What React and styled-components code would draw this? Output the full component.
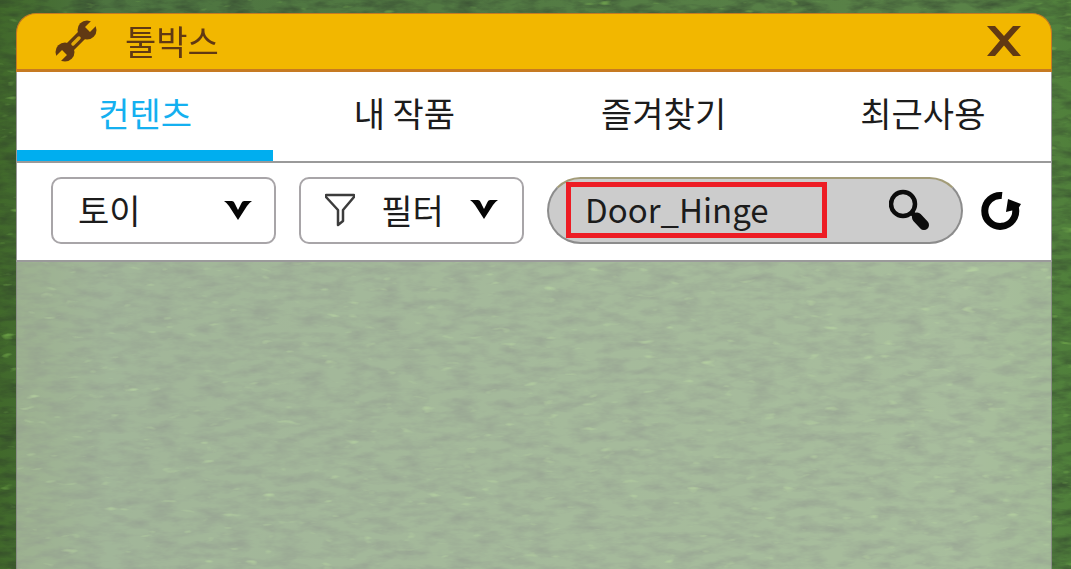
import { useState } from "react";
import styled, { createGlobalStyle } from "styled-components";

const tabs = ["컨텐츠", "내 작품", "즐겨찾기", "최근사용"];

function App() {
  const [active, setActive] = useState(0);
  const [keyword, setKeyword] = useState("Door_Hinge");

  return (
    <Scene>
      <GlobalStyle />
      <Grass aria-hidden="true">
        <defs>
          <linearGradient id="field" x1="0" y1="0" x2="1" y2="0">
            <stop offset="0" stopColor="#41692b" />
            <stop offset="0.1" stopColor="#4d7440" />
            <stop offset="0.9" stopColor="#5a8348" />
            <stop offset="1" stopColor="#50803b" />
          </linearGradient>
          <filter id="blades" x="0" y="0" width="100%" height="100%" colorInterpolationFilters="sRGB">
            <feTurbulence type="fractalNoise" baseFrequency="0.04 0.12" numOctaves="4" seed="4" />
            <feColorMatrix values="0 0 0 0 0.16  0 0 0 0 0.2  0 0 0 0 0.16  1 0 0 0 -0.37" />
          </filter>
          <filter id="shine" x="0" y="0" width="100%" height="100%" colorInterpolationFilters="sRGB">
            <feTurbulence type="fractalNoise" baseFrequency="0.05 0.15" numOctaves="2" seed="11" />
            <feColorMatrix values="0 0 0 0 0.55  0 0 0 0 0.8  0 0 0 0 0.35  0 2.5 0 0 -1.75" />
          </filter>
        </defs>
        <rect width="100%" height="100%" fill="url(#field)" />
        <rect width="100%" height="100%" filter="url(#blades)" />
        <rect width="100%" height="100%" filter="url(#shine)" />
      </Grass>
      <Panel>
        <Header>
          <WrenchIcon />
          <Title>툴박스</Title>
          <CloseButton type="button" aria-label="닫기">
            <svg width="36" height="30" viewBox="0 0 36 30">
              <path d="M1 0h8l9 10 9-10h8L22 14.500 35 30h-8l-9-10.500L9 30H1l13-15.500z" fill="#613913" />
            </svg>
          </CloseButton>
        </Header>
        <Tabs>
          {tabs.map((name, i) => (
            <Tab key={name} type="button" $active={i === active} onClick={() => setActive(i)}>
              {name}
            </Tab>
          ))}
        </Tabs>
        <Toolbar>
          <SelectBox>
            <Select aria-label="분류" defaultValue="토이">
              <option>토이</option>
            </Select>
            <SelectArrow>
              <ArrowIcon />
            </SelectArrow>
          </SelectBox>
          <FilterButton type="button">
            <FunnelIcon />
            <span>필터</span>
            <ArrowIcon />
          </FilterButton>
          <Search onSubmit={(e) => e.preventDefault()}>
            <SearchInput
              aria-label="검색"
              value={keyword}
              onChange={(e) => setKeyword(e.target.value)}
            />
            <IconButton type="submit" aria-label="검색">
              <svg width="42" height="42" viewBox="0 0 42 42">
                <circle cx="14" cy="15" r="12" fill="none" stroke="#0c0c0c" strokeWidth="4.500" />
                <path d="M22 23l5 5" stroke="#0c0c0c" strokeWidth="5" />
                <path d="M28 28.500l7 7.500" stroke="#0c0c0c" strokeWidth="10" strokeLinecap="round" />
              </svg>
            </IconButton>
          </Search>
          <IconButton type="button" aria-label="새로고침">
            <svg width="42" height="40" viewBox="0 0 42 40">
              <path d="M22 4.500A15.500 15.500 0 1 0 35.500 17" fill="none" stroke="#050505" strokeWidth="7" />
              <path d="M28 8l13 5-3 5-12 3z" fill="#050505" />
            </svg>
          </IconButton>
        </Toolbar>
        <Results />
      </Panel>
    </Scene>
  );
}

function WrenchIcon() {
  return (
    <svg width="42" height="42" viewBox="0 0 42 42">
      <path d="M11 31L31 11" stroke="#613913" strokeWidth="10" />
      <circle cx="32" cy="10" r="9.500" fill="#613913" />
      <circle cx="10" cy="32" r="9.500" fill="#613913" />
      <path d="M32.500 9.500L43-1M9.500 32.500L-1 43" stroke="#f2b700" strokeWidth="7" />
      <path d="M18 24l6-6" stroke="#e0a808" strokeWidth="3.500" strokeLinecap="round" />
    </svg>
  );
}

function ArrowIcon() {
  return (
    <svg width="28" height="19" viewBox="0 0 28 19">
      <path d="M0 0h8q2 0 3 3l3 6 3-6q1-3 3-3h8q-3 2-5 5l-9 14L5 5Q3 2 0 0z" fill="#050505" />
    </svg>
  );
}

function FunnelIcon() {
  return (
    <svg width="30" height="34" viewBox="0 0 30 34">
      <path
        d="M1 2h28v2L18 17v11l-5 4V17L1 4z"
        fill="none"
        stroke="#3c3c3c"
        strokeWidth="2.500"
        strokeLinejoin="round"
      />
    </svg>
  );
}

const GlobalStyle = createGlobalStyle`
  * {
    box-sizing: border-box;
  }
  body {
    margin: 0;
  }
  body, button, input, select {
    font-family: "Noto Sans CJK KR", "Noto Sans", sans-serif;
    font-size: 34px;
    line-height: 48px;
    color: #1c1c1c;
  }
  button {
    padding: 0;
    border: 0;
    background: none;
    cursor: pointer;
  }
  svg {
    display: block;
    flex-shrink: 0;
  }
`;

const Scene = styled.main`
  display: flex;
  min-height: 100vh;
  padding: 13px 19px 0 16px;
`;

const Grass = styled.svg`
  position: fixed;
  inset: 0;
  z-index: -1;
  width: 100%;
  height: 100%;
`;

const Panel = styled.section`
  display: flex;
  flex: 1;
  flex-direction: column;
  min-width: 0;
`;

const Header = styled.header`
  display: flex;
  align-items: center;
  height: 59px;
  padding: 0 29px 1px 38px;
  border: 1px solid #c67a22;
  border-bottom-width: 3px;
  border-radius: 20px 20px 0 0;
  background: #f2b700;
`;

const Title = styled.h1`
  flex: 1;
  margin: 0 0 0 28px;
  font-size: 34px;
  font-weight: 400;
  color: #613913;
`;

const CloseButton = styled.button`
  display: flex;
`;

const Tabs = styled.nav`
  display: grid;
  grid-template-columns: repeat(4, 1fr);
  gap: 3px;
  height: 91px;
  border: 1px solid #9a9a9a;
  border-width: 0 1px 2px;
  background: #fff;
`;

const Tab = styled.button`
  padding-top: 4px;
  border-bottom: 11px solid;
  border-color: ${(props) => (props.$active ? "#00aeef" : "transparent")};
  color: ${(props) => (props.$active ? "#14b0f0" : "#1c1c1c")};
`;

const Toolbar = styled.div`
  display: flex;
  align-items: center;
  gap: 23px;
  height: 99px;
  padding: 0 29px 2px 34px;
  border: 1px solid #9a9a9a;
  border-width: 0 1px 2px;
  background: #fff;
`;

const SelectBox = styled.div`
  position: relative;
  flex: 0 1 225px;
`;

const Select = styled.select`
  display: block;
  width: 100%;
  height: 67px;
  padding: 0 25px 2px;
  border: 2px solid #a8a5a8;
  border-radius: 10px;
  appearance: none;
  background: #fff;
`;

const SelectArrow = styled.span`
  position: absolute;
  top: 24px;
  right: 24px;
  pointer-events: none;
`;

const FilterButton = styled.button`
  display: flex;
  flex: 0 1 225px;
  align-items: center;
  justify-content: space-between;
  height: 67px;
  padding: 0 24px 2px;
  border: 2px solid #a8a5a8;
  border-radius: 10px;
`;

const Search = styled.form`
  display: flex;
  flex: 1;
  align-items: center;
  justify-content: space-between;
  min-width: 0;
  height: 67px;
  margin-right: -6px;
  padding: 0 30px 2px 17px;
  border: 2px solid #8c8c8c;
  border-top-color: #a39c78;
  border-radius: 34px;
  background: #ccc;
`;

const SearchInput = styled.input`
  flex: 0 1 261px;
  min-width: 0;
  height: 56px;
  padding: 0 14px 2px;
  border: 5px solid #ed1c24;
  outline: none;
  font-size: 33px;
  background: transparent;
`;

const IconButton = styled.button`
  display: flex;
`;

const Results = styled.div`
  flex: 1;
  border: 1px solid #8a8f86;
  border-width: 0 1px;
  background: rgba(246, 248, 242, 0.5);
`;

export default App;
